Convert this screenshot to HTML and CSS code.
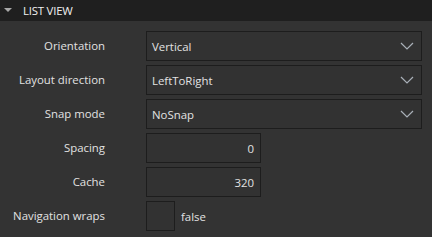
FILE: index.html
```html
<!DOCTYPE html>
<html>
<head>
<meta charset="utf-8">
<link rel="stylesheet" href="styles.css">
</head>
<body>
<div class="panel">
  <div class="header">
    <svg class="caret" width="8" height="5" viewBox="0 0 8 5"><path d="M0 0 H8 L4 4 Z" fill="#a8a8a8"/></svg>
    <span class="title">LIST VIEW</span>
  </div>
  <div class="form">
    <div class="label">Orientation</div>
    <div class="combo"><span>Vertical</span><svg class="chev" width="14" height="8" viewBox="0 0 14 8"><path d="M1 1 L7 7 L13 1" fill="none" stroke="#a9b0b8" stroke-width="1.2"/></svg></div>

    <div class="label">Layout direction</div>
    <div class="combo"><span>LeftToRight</span><svg class="chev" width="14" height="8" viewBox="0 0 14 8"><path d="M1 1 L7 7 L13 1" fill="none" stroke="#a9b0b8" stroke-width="1.2"/></svg></div>

    <div class="label">Snap mode</div>
    <div class="combo"><span>NoSnap</span><svg class="chev" width="14" height="8" viewBox="0 0 14 8"><path d="M1 1 L7 7 L13 1" fill="none" stroke="#a9b0b8" stroke-width="1.2"/></svg></div>

    <div class="label">Spacing</div>
    <div class="spin">0</div>

    <div class="label">Cache</div>
    <div class="spin">320</div>

    <div class="label">Navigation wraps</div>
    <div class="check-row"><div class="check"></div><span>false</span></div>
  </div>
</div>
</body>
</html>
```
FILE: styles.css
```css
html, body {
  margin: 0;
  padding: 0;
  background: #333333;
}
body {
  font-family: "Open Sans", "Noto Sans", sans-serif;
  font-size: 11.4px;
  color: #e2e2e2;
  width: 432px;
  height: 237px;
  overflow: hidden;
}
.header {
  height: 21px;
  background: #1f1f1f;
  display: flex;
  align-items: center;
  padding-left: 4px;
}
.caret {
  display: block;
  margin-right: 11px;
}
.title {
  color: #f0f0f0;
  font-size: 11.4px;
  letter-spacing: -0.2px;
}
.form {
  display: grid;
  grid-template-columns: 105px 276px;
  column-gap: 41px;
  row-gap: 4px;
  padding-top: 10px;
}
.label {
  text-align: right;
  height: 30px;
  line-height: 30px;
  white-space: nowrap;
}
.combo, .spin {
  box-sizing: border-box;
  height: 30px;
  border: 1px solid #1d1d1d;
  background: #323232;
  display: flex;
  align-items: center;
}
.combo {
  justify-content: space-between;
  padding: 0 7px 0 5px;
}
.chev {
  display: block;
}
.spin {
  width: 115px;
  justify-content: flex-end;
  padding-right: 6px;
}
.check-row {
  display: flex;
  align-items: center;
  height: 30px;
}
.check {
  box-sizing: border-box;
  width: 29px;
  height: 30px;
  border: 1px solid #1d1d1d;
  background: #323232;
  margin-right: 6px;
}
```
